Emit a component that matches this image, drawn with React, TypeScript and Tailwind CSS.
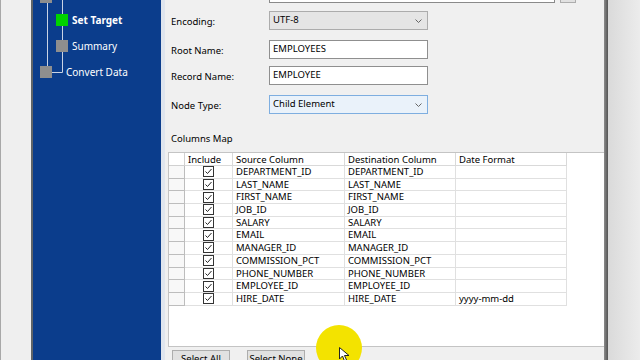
import React from 'react';

const rows: [string, string][] = [
  ['DEPARTMENT_ID', ''],
  ['LAST_NAME', ''],
  ['FIRST_NAME', ''],
  ['JOB_ID', ''],
  ['SALARY', ''],
  ['EMAIL', ''],
  ['MANAGER_ID', ''],
  ['COMMISSION_PCT', ''],
  ['PHONE_NUMBER', ''],
  ['EMPLOYEE_ID', ''],
  ['HIRE_DATE', 'yyyy-mm-dd'],
];

function Chevron() {
  return (
    <svg width="7" height="4" viewBox="0 0 7 4" className="mr-[5px]">
      <polyline points="0.5,0.5 3.5,3.5 6.5,0.5" fill="none" stroke="#666" strokeWidth="1" />
    </svg>
  );
}

function CheckBox() {
  return (
    <svg width="11" height="11" viewBox="0 0 11 11">
      <rect x="0.5" y="0.5" width="10" height="10" fill="#fff" stroke="#333" />
      <polyline points="2.5,5.5 4.5,7.5 8.5,3" fill="none" stroke="#222" strokeWidth="1" />
    </svg>
  );
}

function FieldRow({ label, children }: { label: string; children: React.ReactNode }) {
  return (
    <div className="flex items-center h-[19px]">
      <span className="w-[104px] pl-[6px] pt-[3px]">{label}</span>
      {children}
    </div>
  );
}

export default function App() {
  return (
    <div
      className="relative flex w-[640px] h-[360px] overflow-hidden bg-[#f0f0f0] text-[9.5px] text-black"
      style={{ fontFamily: '"Noto Sans", "Liberation Sans", sans-serif' }}
    >
      {/* left window edge */}
      <div className="w-[33px] shrink-0 border-l border-[#a8a8a8] border-r-2 border-r-[#5f6468] bg-[#efefef]" />

      {/* step tree */}
      <div className="relative w-[128px] shrink-0 bg-[#0b3d8c] text-white text-[10px]">
        <svg className="absolute left-0 top-0" width="128" height="90" viewBox="0 0 128 90">
          <line x1="14.5" y1="0" x2="14.5" y2="67" stroke="#c9d3e4" />
          <line x1="29.5" y1="0" x2="29.5" y2="72.5" stroke="#c9d3e4" />
          <line x1="19" y1="72.5" x2="29.5" y2="72.5" stroke="#c9d3e4" />
          <rect x="7" y="-9" width="12" height="12" fill="#8e8e8e" />
        </svg>
        <div className="relative flex flex-col pt-[7px]">
          <div className="flex items-center h-[26px] pl-[23px] gap-[4px]">
            <span className="w-[12px] h-[12px] bg-[#00d400]" />
            <span className="font-bold">Set Target</span>
          </div>
          <div className="flex items-center h-[26px] pl-[23px] gap-[4px]">
            <span className="w-[12px] h-[12px] bg-[#8e8e8e]" />
            <span>Summary</span>
          </div>
          <div className="flex items-center h-[26px] pl-[7px] gap-[14px]">
            <span className="w-[12px] h-[12px] bg-[#8e8e8e]" />
            <span>Convert Data</span>
          </div>
        </div>
      </div>

      <div className="w-[4px] shrink-0 bg-[#dfe5ee]" />

      {/* form */}
      <div className="flex flex-col w-[439px] shrink-0">
        <div className="flex h-[3px] shrink-0">
          <div className="ml-[104px] w-[286px] h-[3px] bg-white border-x border-b border-[#8a8a8a]" />
          <div className="ml-[5px] w-[16px] h-[3px] bg-[#e1e1e1] border-x border-b border-[#adadad]" />
        </div>

        <div className="mt-[8px] shrink-0">
          <FieldRow label="Encoding:">
            <div className="flex items-center justify-between w-[159px] h-[19px] pl-[3px] bg-[#e5e5e5] border border-[#acacac]">
              <span>UTF-8</span>
              <Chevron />
            </div>
          </FieldRow>
        </div>
        <div className="mt-[10px] shrink-0">
          <FieldRow label="Root Name:">
            <div className="flex items-center w-[159px] h-[19px] pl-[3px] bg-white border border-[#8f8f8f]">EMPLOYEES</div>
          </FieldRow>
        </div>
        <div className="mt-[7px] shrink-0">
          <FieldRow label="Record Name:">
            <div className="flex items-center w-[159px] h-[19px] pl-[3px] bg-white border border-[#8f8f8f]">EMPLOYEE</div>
          </FieldRow>
        </div>
        <div className="mt-[10px] shrink-0">
          <FieldRow label="Node Type:">
            <div className="flex items-center justify-between w-[159px] h-[19px] pl-[3px] bg-[#eaf2fa] border border-[#7eaee0]">
              <span>Child Element</span>
              <Chevron />
            </div>
          </FieldRow>
        </div>

        <div className="mt-[19px] h-[12px] leading-[12px] pl-[6px] shrink-0">Columns Map</div>

        {/* grid */}
        <div className="mt-[7px] ml-[3px] h-[195px] shrink-0 bg-white border-l border-t border-b border-[#c4c4c4]">
          <div className="flex h-[13px] leading-[13px]">
            <div className="w-[16px] border-r border-b border-[#d0d0d0]" />
            <div className="w-[48px] pl-[3px] border-r border-b border-[#d9d9d9]">Include</div>
            <div className="w-[112px] pl-[3px] border-r border-b border-[#d9d9d9]">Source Column</div>
            <div className="w-[111px] pl-[3px] border-r border-b border-[#d9d9d9]">Destination Column</div>
            <div className="w-[111px] pl-[3px] border-r border-b border-[#d9d9d9]">Date Format</div>
          </div>
          {rows.map(([name, fmt]) => (
            <div key={name} className="flex h-[12.7px] leading-[12px]">
              <div className="w-[16px] bg-[#f8f8f8] border-r border-b border-[#bdbdbd]" />
              <div className="flex items-center justify-center w-[48px] border-r border-b border-[#e0e0e0]">
                <CheckBox />
              </div>
              <div className="w-[112px] pl-[3px] border-r border-b border-[#e0e0e0]">{name}</div>
              <div className="w-[111px] pl-[3px] border-r border-b border-[#e0e0e0]">{name}</div>
              <div className="w-[111px] pl-[3px] border-r border-b border-[#e0e0e0]">{fmt}</div>
            </div>
          ))}
        </div>

        <div className="flex mt-[3px] shrink-0">
          <div className="ml-[7px] w-[58px] h-[22px] pt-[1px] text-center bg-[#e1e1e1] border border-[#adadad]">Select All</div>
          <div className="ml-[17px] w-[58px] h-[22px] pt-[1px] text-center bg-[#e1e1e1] border border-[#adadad]">Select None</div>
        </div>
      </div>

      <div className="w-[4px] shrink-0 bg-gradient-to-r from-[#8c8c8c] to-[#555]" />
      <div className="flex-1 bg-gradient-to-r from-[#dadada] to-[#ececec]" />

      {/* cursor highlight */}
      <div className="absolute left-[316px] top-[325px] w-[46px] h-[46px] rounded-full bg-[#f3e300]" />
      <svg className="absolute left-[339px] top-[347px]" width="12" height="16" viewBox="0 0 12 16">
        <path d="M0.5,0.5 L0.5,12 L3.5,9 L5.5,14 L7.5,13 L5.5,8.5 L10,8.5 Z" fill="#fff" stroke="#222" strokeWidth="1" />
      </svg>
    </div>
  );
}
